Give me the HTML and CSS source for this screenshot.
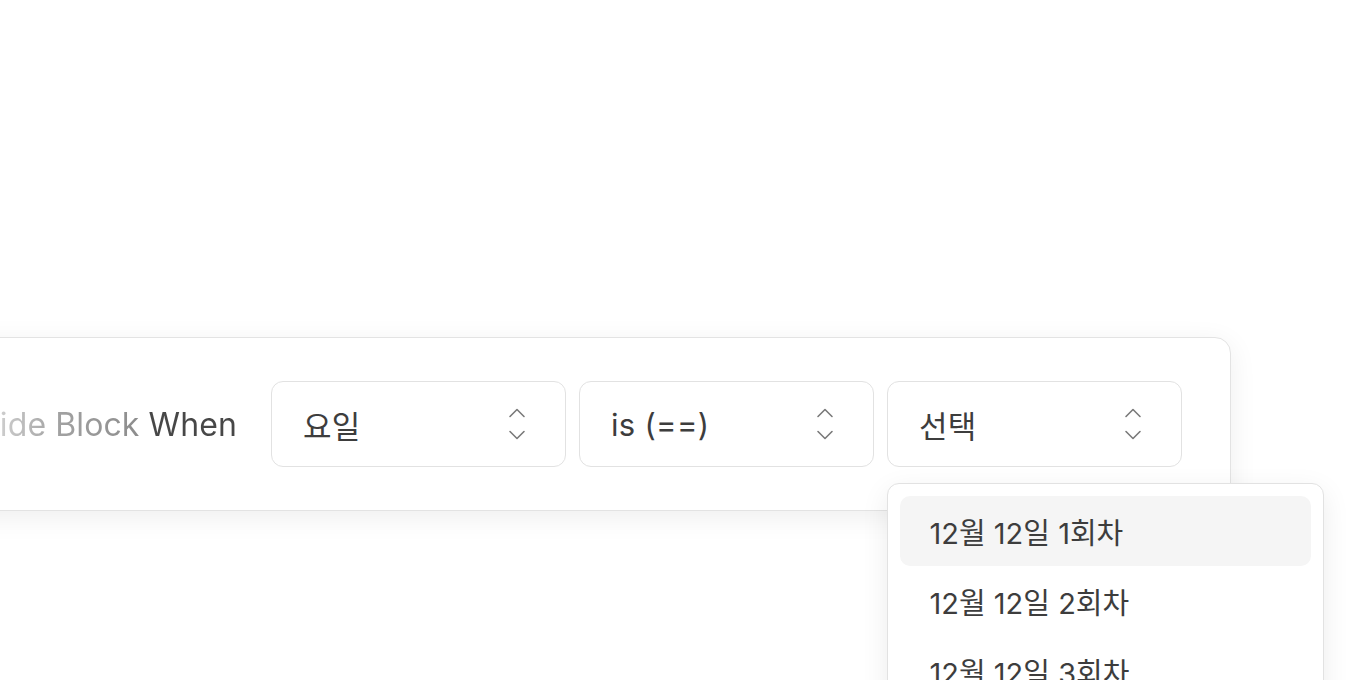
FILE: index.html
```html
<!DOCTYPE html>
<html lang="ko">
<head>
<meta charset="utf-8">
<link rel="stylesheet" href="styles.css">
</head>
<body>
<div class="stage">
  <div class="card">
    <span class="label">Hide Block When</span>
    <div class="select">
      <span class="value">요일</span>
      <svg class="chev" width="18" height="36" viewBox="0 0 18 36"><path d="M2 10.5 L9 3.5 L16 10.5" /><path d="M2 25.5 L9 32.5 L16 25.5" /></svg>
    </div>
    <div class="select">
      <span class="value">is (==)</span>
      <svg class="chev" width="18" height="36" viewBox="0 0 18 36"><path d="M2 10.5 L9 3.5 L16 10.5" /><path d="M2 25.5 L9 32.5 L16 25.5" /></svg>
    </div>
    <div class="select open">
      <span class="value">선택</span>
      <svg class="chev" width="18" height="36" viewBox="0 0 18 36"><path d="M2 10.5 L9 3.5 L16 10.5" /><path d="M2 25.5 L9 32.5 L16 25.5" /></svg>
      <div class="menu">
        <div class="item active">12월 12일 1회차</div>
        <div class="item">12월 12일 2회차</div>
        <div class="item">12월 12일 3회차</div>
      </div>
    </div>
  </div>
</div>
</body>
</html>
```

FILE: styles.css
```css
html, body {
  margin: 0;
  padding: 0;
  background: #ffffff;
  overflow: hidden;
  height: 680px;
}
body {
  font-family: Inter, "Noto Sans CJK KR", sans-serif;
  color: #404040;
}
.stage {
  padding-top: 337px;
}
.card {
  box-sizing: border-box;
  margin-left: -60px;
  width: 1291px;
  height: 174px;
  border: 1px solid #e3e3e3;
  border-radius: 16px;
  background: #fff;
  box-shadow: 0 6px 28px rgba(0, 0, 0, 0.07);
  display: flex;
  align-items: center;
  justify-content: flex-end;
  gap: 13px;
  padding: 0 48px 0 0;
}
.label {
  font-size: 32px;
  white-space: nowrap;
  margin-right: 21px;
  background: linear-gradient(270deg, #474747 0px, #474747 88px, #8c8c8c 96px, #a2a2a2 180px, #cdcdcd 237px, #f5f5f5 262px);
  -webkit-background-clip: text;
  background-clip: text;
  color: transparent;
  letter-spacing: 0.1px;
}
.select {
  position: relative;
  box-sizing: border-box;
  width: 295px;
  height: 86px;
  border: 1.5px solid #e2e2e2;
  border-radius: 12px;
  display: flex;
  align-items: center;
  justify-content: space-between;
  padding: 0 39px 0 31px;
  background: #fff;
}
.value {
  font-size: 31px;
  color: #3d3d3d;
  letter-spacing: 0.3px;
}
.chev {
  fill: none;
  stroke: #7a7a7a;
  stroke-width: 1.6;
  stroke-linecap: round;
  stroke-linejoin: round;
}
.menu {
  position: absolute;
  top: 101px;
  left: -1.5px;
  width: 437px;
  box-sizing: border-box;
  border: 1.5px solid #e2e2e2;
  border-radius: 12px;
  background: #fff;
  box-shadow: 0 8px 28px rgba(0, 0, 0, 0.08);
  padding: 12px 12px;
  display: flex;
  flex-direction: column;
}
.item {
  height: 70px;
  display: flex;
  align-items: center;
  padding-left: 30px;
  border-radius: 10px;
  font-size: 29px;
  color: #3d3d3d;
  letter-spacing: 0px;
}
.item.active {
  background: #f5f5f5;
}
```
